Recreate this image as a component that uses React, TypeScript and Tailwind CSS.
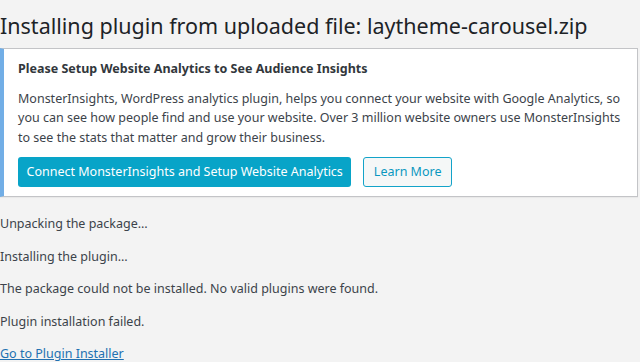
export default function App() {
  return (
    <div className="w-[640px] h-[362px] overflow-hidden bg-[#f3f3f3] text-[#3c434a] text-[12.5px] leading-[19.5px] font-['Noto_Sans',sans-serif]">
      <h1 className="text-[21.5px] leading-[29px] font-normal text-[#1d2327] pt-[11px] pb-[8px]">
        Installing plugin from uploaded file: laytheme-carousel.zip
      </h1>
      <div className="mr-[2px] bg-white border border-[#c3c4c7] border-l-4 border-l-[#72aee6] pl-[14px] pr-3 pt-[10px] pb-[9px] shadow-[0_1px_1px_rgba(0,0,0,0.04)]">
        <p className="font-bold text-[#32373c]">Please Setup Website Analytics to See Audience Insights</p>
        <p className="mt-[10px]">
          MonsterInsights, WordPress analytics plugin, helps you connect your website with Google Analytics, so you can see how people find and use your website. Over 3 million website owners use MonsterInsights to see the stats that matter and grow their business.
        </p>
        <div className="flex gap-3 mt-[10px]">
          <button className="h-[30px] px-[8.5px] rounded-[3px] bg-[#08a4c8] text-white">
            Connect MonsterInsights and Setup Website Analytics
          </button>
          <button className="h-[30px] px-[9.5px] rounded-[3px] border border-[#13a3c9] bg-[#f5f7f7] text-[#0b97c0]">
            Learn More
          </button>
        </div>
      </div>
      <div className="flex flex-col gap-[13px] mt-[17px]">
        <p>Unpacking the package…</p>
        <p>Installing the plugin…</p>
        <p>The package could not be installed. No valid plugins were found.</p>
        <p>Plugin installation failed.</p>
        <a href="#" className="text-[#2271b1] underline">Go to Plugin Installer</a>
      </div>
    </div>
  )
}
